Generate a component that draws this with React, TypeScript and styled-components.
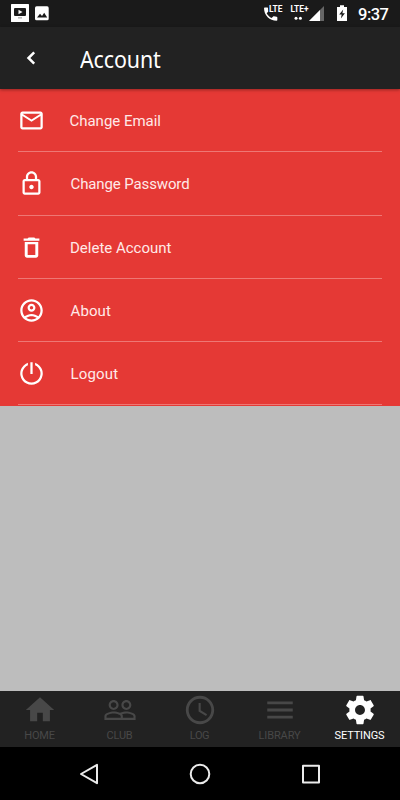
import React from "react";
import styled, { createGlobalStyle } from "styled-components";

const GlobalStyle = createGlobalStyle`
  * { box-sizing: border-box; }
  body { margin: 0; background: #bdbdbd; }
`;

const Screen = styled.div`
  width: 400px;
  height: 800px;
  display: flex;
  flex-direction: column;
  background: #bdbdbd;
  font-family: Roboto, sans-serif;
  overflow: hidden;
`;

const StatusBar = styled.div`
  height: 27px;
  flex: none;
  display: flex;
  align-items: center;
  justify-content: space-between;
  background: #1a1a1a;
`;

const StatusIcons = styled.svg`
  display: block;
  flex: none;
`;

const StatusRight = styled.div`
  display: flex;
  align-items: center;
`;

const Clock = styled.span`
  width: 42px;
  padding-top: 2px;
  color: #fff;
  font-size: 16.5px;
  line-height: 26px;
  font-weight: 500;
  letter-spacing: -0.5px;
`;

const Header = styled.header`
  height: 62px;
  flex: none;
  display: flex;
  align-items: center;
  background: #222;
  box-shadow: 0 1px 3px rgba(0, 0, 0, 0.35);
  z-index: 1;
`;

const BackIcon = styled.svg`
  display: block;
  margin: 0 44px 0 26px;
`;

const Title = styled.h1`
  margin: 1px 0 0;
  color: #fff;
  font: 400 23px/32px "Noto Sans", sans-serif;
  letter-spacing: -0.1px;
  transform: scaleX(0.93);
  transform-origin: left center;
`;

const Menu = styled.div`
  height: 316.5px;
  flex: none;
  display: grid;
  grid-template-rows: repeat(5, 1fr);
  padding: 0 18px;
  background: #e53935;
`;

const MenuRow = styled.div`
  display: flex;
  align-items: center;
  border-bottom: 1px solid #ee7774;
`;

const MenuIcon = styled.svg`
  width: 27px;
  height: 27px;
  flex: none;
  margin: 1px 0 0 -0.5px;
  fill: #fff;
`;

const MenuLabel = styled.span<{ $shift: number; $spacing: number }>`
  margin-left: ${(p) => 25 + p.$shift}px;
  padding-top: 2px;
  color: #ffe9e8;
  font-size: 15px;
  line-height: 20px;
  font-weight: 400;
  letter-spacing: ${(p) => p.$spacing}px;
`;

const Content = styled.div`
  flex: 1;
`;

const Tabs = styled.nav`
  height: 56px;
  flex: none;
  display: grid;
  grid-template-columns: repeat(5, 1fr);
  background: #222;
`;

const Tab = styled.div<{ $active: boolean }>`
  display: flex;
  flex-direction: column;
  align-items: center;
  padding-top: 2px;
  color: ${(p) => (p.$active ? "#fff" : "#484848")};
`;

const TabIcon = styled.svg`
  width: 34px;
  height: 34px;
  fill: currentColor;
`;

const TabLabel = styled.span<{ $spacing: number }>`
  margin-right: 1px;
  padding-top: 1px;
  font-size: 11px;
  line-height: 16px;
  letter-spacing: ${(p) => p.$spacing}px;
`;

const SystemBar = styled.div`
  height: 53px;
  flex: none;
  display: flex;
  align-items: center;
  justify-content: space-between;
  padding: 0 77px;
  background: #000;
`;

const SystemIcon = styled.svg`
  width: 24px;
  height: 24px;
  fill: none;
  stroke: #ebebeb;
  stroke-width: 2;
  stroke-linejoin: round;
`;

const menu = [
  {
    label: "Change Email",
    shift: 0,
    spacing: -0.02,
    path: "M22 6c0-1.1-.9-2-2-2H4c-1.1 0-2 .9-2 2v12c0 1.1.9 2 2 2h16c1.1 0 2-.9 2-2V6zm-2 0l-8 5-8-5h16zm0 12H4V8l8 5 8-5v10z",
  },
  {
    label: "Change Password",
    shift: 1,
    spacing: -0.12,
    path: "M18 8h-1V6c0-2.76-2.24-5-5-5S7 3.24 7 6v2H6c-1.1 0-2 .9-2 2v10c0 1.1.9 2 2 2h12c1.1 0 2-.9 2-2V10c0-1.1-.9-2-2-2zM9 6c0-1.66 1.34-3 3-3s3 1.34 3 3v2H9V6zm9 14H6V10h12v10zm-6-3c1.1 0 2-.9 2-2s-.9-2-2-2-2 .9-2 2 .9 2 2 2z",
  },
  {
    label: "Delete Account",
    shift: 0.5,
    spacing: 0,
    path: "M6 19c0 1.1.9 2 2 2h8c1.1 0 2-.9 2-2V7H6v12zM8.6 9h6.8v9.6H8.6V9zm6.9-5l-1-1h-5l-1 1H5v2h14V4z",
  },
  {
    label: "About",
    shift: 1,
    spacing: 0.1,
    path: "M12 2C6.48 2 2 6.48 2 12s4.48 10 10 10 10-4.48 10-10S17.52 2 12 2zM7.35 18.5C8.66 17.56 10.26 17 12 17s3.34.56 4.65 1.5C15.34 19.44 13.74 20 12 20s-3.34-.56-4.65-1.5zm10.79-1.38C16.45 15.8 14.32 15 12 15s-4.45.8-6.14 2.12C4.7 15.73 4 13.95 4 12c0-4.42 3.58-8 8-8s8 3.58 8 8c0 1.95-.7 3.73-1.86 5.12zM12 6c-1.93 0-3.5 1.57-3.5 3.5S10.07 13 12 13s3.5-1.57 3.5-3.5S13.93 6 12 6zm0 5c-.83 0-1.5-.67-1.5-1.5S11.17 8 12 8s1.5.67 1.5 1.5S12.83 11 12 11z",
  },
  {
    label: "Logout",
    shift: 1,
    spacing: 0.15,
    path: "M13 2h-2v10.5h2V2zM15.2 2.53v2.14A8 8 0 1 1 8.8 4.67V2.53A10 10 0 1 0 15.2 2.53z",
  },
];

const tabs = [
  { label: "HOME", spacing: -0.2, path: "M10 20v-6h4v6h5v-8h3L12 3 2 12h3v8z" },
  {
    label: "CLUB",
    spacing: -0.2,
    path: "M16.5 13c-1.2 0-3.07.34-4.5 1-1.43-.67-3.3-1-4.5-1C5.33 13 1 14.08 1 16.25V19h22v-2.75c0-2.17-4.33-3.25-6.5-3.25zm-4 4.5h-10v-1.25c0-.54 2.56-1.75 5-1.75s5 1.21 5 1.75v1.25zm9 0H14v-1.25c0-.46-.2-.86-.52-1.22.88-.3 1.96-.53 3.02-.53 2.44 0 5 1.21 5 1.75v1.25zM7.5 12c1.93 0 3.5-1.57 3.5-3.5S9.43 5 7.5 5 4 6.57 4 8.5 5.57 12 7.5 12zm0-5.5c1.1 0 2 .9 2 2s-.9 2-2 2-2-.9-2-2 .9-2 2-2zm9 5.5c1.93 0 3.5-1.57 3.5-3.5S18.43 5 16.5 5 13 6.57 13 8.5s1.57 3.5 3.5 3.5zm0-5.5c1.1 0 2 .9 2 2s-.9 2-2 2-2-.9-2-2 .9-2 2-2z",
  },
  {
    label: "LOG",
    spacing: -0.4,
    path: "M11.99 2C6.47 2 2 6.48 2 12s4.47 10 9.99 10C17.52 22 22 17.52 22 12S17.52 2 11.99 2zM12 20a8 8 0 1 1 0-16 8 8 0 0 1 0 16zM12.5 7H11v6l5.25 3.15.75-1.23-4.5-2.67z",
  },
  { label: "LIBRARY", spacing: -0.1, path: "M3 18h18v-2H3v2zm0-5h18v-2H3v2zm0-7v2h18V6H3z" },
  {
    label: "SETTINGS",
    spacing: -0.15,
    path: "M19.43 12.98c.04-.32.07-.64.07-.98s-.03-.66-.07-.98l2.11-1.65c.19-.15.24-.42.12-.64l-2-3.46c-.12-.22-.39-.3-.61-.22l-2.49 1c-.52-.4-1.08-.73-1.69-.98l-.38-2.65C14.46 2.18 14.25 2 14 2h-4c-.25 0-.46.18-.49.42l-.38 2.65c-.61.25-1.17.59-1.69.98l-2.49-1c-.23-.09-.49 0-.61.22l-2 3.46c-.13.22-.07.49.12.64l2.11 1.65c-.04.32-.07.65-.07.98s.03.66.07.98l-2.11 1.65c-.19.15-.24.42-.12.64l2 3.46c.12.22.39.3.61.22l2.49-1c.52.4 1.08.73 1.69.98l.38 2.65c.03.24.24.42.49.42h4c.25 0 .46-.18.49-.42l.38-2.65c.61-.25 1.17-.59 1.69-.98l2.49 1c.23.09.49 0 .61-.22l2-3.46c.12-.22.07-.49-.12-.64l-2.11-1.65zM12 15.5c-1.93 0-3.5-1.57-3.5-3.5s1.57-3.5 3.5-3.5 3.5 1.57 3.5 3.5-1.57 3.5-3.5 3.5z",
  },
];

function NotificationIcons() {
  return (
    <StatusIcons width="60" height="27" viewBox="0 0 60 27">
      <rect x="11" y="4" width="18" height="18" rx=".6" fill="#fff" />
      <rect x="14" y="8" width="12" height="8" rx="1" fill="#1a1a1a" />
      <path d="M18.5 9.7v4.6l4-2.3z" fill="#fff" />
      <rect x="18" y="17" width="4" height="1.6" fill="#bbb" />
      <rect x="35" y="6.3" width="13.7" height="14" rx="1.6" fill="#fff" />
      <path d="M37 17.5l3-3.7 2 2.2 2.2-3.2 3 4.7z" fill="#1a1a1a" />
    </StatusIcons>
  );
}

function SignalIcons() {
  return (
    <StatusIcons width="94" height="27" viewBox="264 0 94 27">
      <path
        transform="translate(261.8 5.2) scale(.74)"
        d="M6.6 10.8c1.4 2.8 3.8 5.1 6.6 6.6l2.2-2.2c.3-.3.7-.4 1-.2 1.1.4 2.3.6 3.6.6.6 0 1 .4 1 1V20c0 .6-.4 1-1 1C10.6 21 3 13.4 3 4c0-.6.4-1 1-1h3.5c.6 0 1 .4 1 1 0 1.3.2 2.5.6 3.6.1.3 0 .7-.2 1z"
        fill="#fff"
      />
      <rect x="268.4" y="5" width="15" height="7" fill="#1a1a1a" />
      <g fill="#fff" fontFamily="Roboto, sans-serif" fontWeight="700" fontSize="8.8">
        <text x="269" y="12" textLength="13.5" lengthAdjust="spacingAndGlyphs">LTE</text>
        <text x="290.5" y="12" textLength="18" lengthAdjust="spacingAndGlyphs">LTE+</text>
      </g>
      <circle cx="296" cy="18.3" r="1.5" fill="#fff" />
      <circle cx="300.4" cy="18.3" r="1.5" fill="#fff" />
      <path d="M324 6v15h-15z" fill="#666" />
      <path d="M320 10v11h-11z" fill="#fff" />
      <path d="M340 5.3h4v1.6h3V21h-10V6.9h3z" fill="#fff" />
      <path d="M343.2 9.5l-4 5h2.5l-.8 4 4-5.2h-2.5z" fill="#1a1a1a" />
    </StatusIcons>
  );
}

export default function App() {
  return (
    <Screen>
      <GlobalStyle />
      <StatusBar>
        <NotificationIcons />
        <StatusRight>
          <SignalIcons />
          <Clock>9:37</Clock>
        </StatusRight>
      </StatusBar>
      <Header>
        <BackIcon width="10" height="14" viewBox="0 0 10 14">
          <path d="M8.2 1.3L2.5 7l5.7 5.7" fill="none" stroke="#fff" strokeWidth="2.5" />
        </BackIcon>
        <Title>Account</Title>
      </Header>
      <Menu>
        {menu.map((item) => (
          <MenuRow key={item.label}>
            <MenuIcon viewBox="0 0 24 24">
              <path d={item.path} />
            </MenuIcon>
            <MenuLabel $shift={item.shift} $spacing={item.spacing}>
              {item.label}
            </MenuLabel>
          </MenuRow>
        ))}
      </Menu>
      <Content />
      <Tabs>
        {tabs.map((tab) => (
          <Tab key={tab.label} $active={tab.label === "SETTINGS"}>
            <TabIcon viewBox="0 0 24 24">
              <path d={tab.path} />
            </TabIcon>
            <TabLabel $spacing={tab.spacing}>{tab.label}</TabLabel>
          </Tab>
        ))}
      </Tabs>
      <SystemBar>
        <SystemIcon viewBox="0 0 24 24">
          <path d="M20 2.8v18.4L4 12z" />
        </SystemIcon>
        <SystemIcon viewBox="0 0 24 24">
          <circle cx="12" cy="12" r="9.3" />
        </SystemIcon>
        <SystemIcon viewBox="0 0 24 24">
          <rect x="4" y="3.8" width="16" height="16.6" />
        </SystemIcon>
      </SystemBar>
    </Screen>
  );
}
